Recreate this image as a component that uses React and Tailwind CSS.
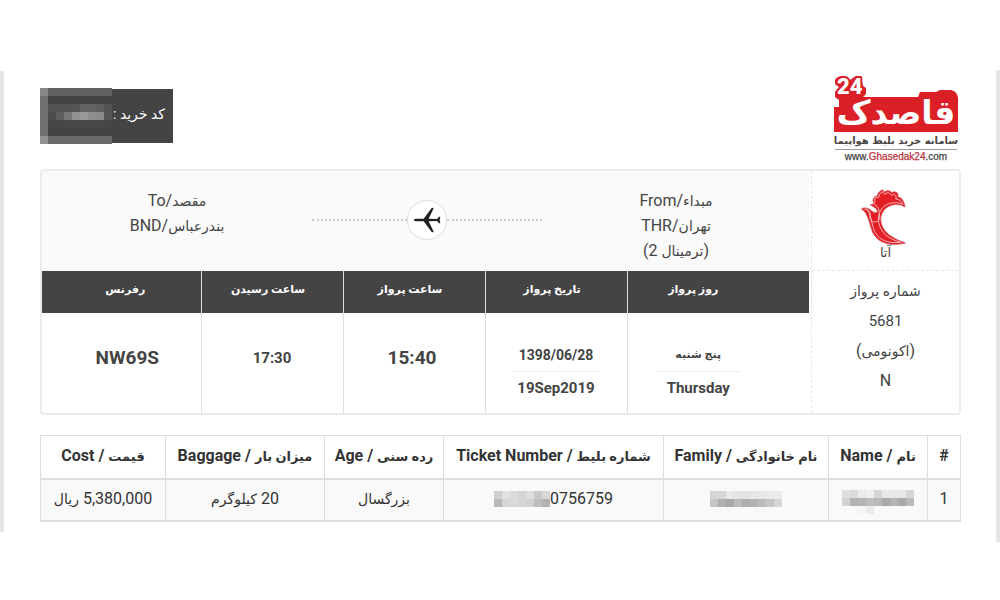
import React from 'react';

const CODE_MOSAIC = [
  ['#868686', '#606060', '#606060', '#606060', '#606060', '#606060', '#606060', '#606060', '#606060'],
  ['#707070', '#434343', '#434343', '#434343', '#434343', '#434343', '#434343', '#434343', '#434343'],
  ['#707070', '#525252', '#525252', '#525252', '#565656', '#626262', '#626262', '#5e5e5e', '#525252'],
  ['#707070', '#4d4d4d', '#5e5e5e', '#777777', '#929292', '#999999', '#8e8e8e', '#8c8c8c', '#555555'],
  ['#707070', '#454545', '#454545', '#484848', '#484848', '#484848', '#484848', '#484848', '#464646'],
  ['#707070', '#434343', '#434343', '#434343', '#434343', '#434343', '#434343', '#434343', '#434343'],
  ['#919191', '#6a6a6a', '#6a6a6a', '#6a6a6a', '#6a6a6a', '#6a6a6a', '#6a6a6a', '#6a6a6a', '#6a6a6a'],
];

const TICKET_MOSAIC = [
  ['#cfcfcf', '#e0e0e0', '#dbdbdb', '#d5d5d5', '#dedede', '#c9c9c9', '#d8d8d8'],
  ['#b8b8b8', '#d6d6d6', '#dadada', '#d5d5d5', '#d2d2d2', '#bebebe', '#b2b2b2'],
];

const FAMILY_MOSAIC = [
  ['#d6d6d6', '#d6d6d6', '#e8e8e8', '#e4e4e4', '#e4e4e4', '#e6e6e6', '#e8e8e8', '#ebebeb', '#ebebeb'],
  ['#c5c5c5', '#b0b0b0', '#a8a8a8', '#bbbbbb', '#aeaeae', '#b2b2b2', '#bbbbbb', '#c5c5c5', '#d6d6d6'],
];

const NAME_MOSAIC = [
  ['#dedede', '#dadada', '#eaeaea', '#f0f0f0', '#d6d6d6', '#e8e8e8', '#e6e6e6', '#e8e8e8', '#d6d6d6'],
  ['#d2d2d2', '#b2b2b2', '#b6b6b6', '#bebebe', '#b8b8b8', '#a9a9a9', '#b4b4b4', '#aaaaaa', '#bbbbbb'],
  ['none', 'none', '#f5f5f5', '#ebebeb', 'none', 'none', 'none', 'none', 'none'],
];

function Mosaic({ rows, className }) {
  const cols = rows[0].length;
  return (
    <svg
      width={cols * 8}
      height={rows.length * 8}
      shapeRendering="crispEdges"
      aria-hidden="true"
      className={className}
    >
      {rows.map((row, y) =>
        row.map((fill, x) => (
          <rect key={`${x}-${y}`} x={x * 8} y={y * 8} width="8" height="8" fill={fill} />
        ))
      )}
    </svg>
  );
}

function BrandLogo() {
  return (
    <svg width="128" height="90" viewBox="0 0 128 90" role="img" aria-label="Ghasedak24">
      <path
        fill="#da1f26"
        d="M2 33H7V26L3 23V18L7 13L3 10V6Q5 2 11 2Q16 2 18 6L24 2H29L31 12L34 14V20L31 23H86L88 18H104L108 16H119Q125 17 126 24V58H2Z"
      />
      <text x="5" y="20" fontSize="22" fontWeight="900" fontFamily="Roboto, sans-serif" fill="#ffffff" stroke="#da1f26" strokeWidth="4" strokeLinejoin="round" paintOrder="stroke">
        24
      </text>
      <text x="64" y="50" direction="rtl" textAnchor="middle" fontSize="33" fontWeight="700" fontFamily="DejaVu Sans, sans-serif" fill="#ffffff">
        قاصدک
      </text>
      <text x="64" y="70" direction="rtl" textAnchor="middle" fontSize="10" fontWeight="700" fontFamily="DejaVu Sans, sans-serif" fill="#4a4646">
        سامانه خرید بلیط هواپیما
      </text>
      <rect x="3" y="75" width="122" height="1" fill="#9a9a9a" />
      <text x="64" y="86" direction="ltr" textAnchor="middle" fontSize="10" fontFamily="Liberation Sans, sans-serif" fill="#444444" stroke="#444444" strokeWidth="0.25">
        www.<tspan fill="#b8323a" stroke="#b8323a">Ghasedak24</tspan>.com
      </text>
    </svg>
  );
}

function AirlineLogo() {
  return (
    <svg width="47" height="57" viewBox="0 0 141 171" fill="none" aria-hidden="true">
      <path
        fill="#e31e25"
        stroke="#d9555b"
        strokeWidth="2.5"
        strokeLinejoin="round"
        d="M4 63C12 57 26 60 34 68C41 74 48 76 52 72C53 60 41 58 31 50C38 50 43 46 39 38C38 30 45 24 52 24C53 13 61 9 67 5L73 12C82 5 91 8 95 14C107 7 118 16 113 27C125 26 133 42 135 57C118 46 93 47 76 62C61 77 58 98 69 119C82 143 108 154 136 165C98 175 57 168 40 137C29 116 26 73 4 63Z"
      />
      <path
        stroke="#ffffff"
        strokeWidth="2"
        strokeLinejoin="round"
        d="M13 64C23 63 31 70 31 80C27 96 38 105 49 101C61 98 61 85 57 77M57 73C58 57 48 53 40 47C48 43 43 34 45 30C50 26 56 31 57 26C57 17 63 15 67 11L74 19C83 11 89 15 94 22C105 15 111 24 107 33C117 33 124 39 128 49C111 41 88 42 71 56C53 74 51 99 62 121C75 146 96 155 122 163C88 167 59 158 46 134C34 112 34 75 19 63"
      />
    </svg>
  );
}

function Plane() {
  return (
    <svg width="28" height="26" viewBox="0 0 84 78" fill="#222222" aria-hidden="true">
      <path d="M2 39Q3 35 12 35H32L56 3Q59 1 62 4L47 35L72 36L78 29H82L80 39L82 49H78L72 42L47 43L62 74Q59 77 56 75L32 43H12Q3 43 2 39Z" />
    </svg>
  );
}

function Fa({ children }) {
  return <span className="text-[14px] leading-none">{children}</span>;
}

function FaBold({ children }) {
  return <span className="text-[13px] leading-none">{children}</span>;
}

const flightHead = 'border-l border-[#dddddd] pr-2 pb-1 font-bold';

function FlightTable() {
  return (
    <table dir="rtl" className="w-full flex-1 table-fixed border-collapse text-center">
      <colgroup>
        <col className="w-[182px]" />
        <col className="w-[142px]" />
        <col className="w-[142px]" />
        <col className="w-[142px]" />
        <col className="w-[159px]" />
      </colgroup>
      <thead>
        <tr className="h-[42px] bg-[#444444] text-[11px] text-white">
          <th className="border-l border-[#dddddd] pr-[50px] pb-1 font-bold">روز پرواز</th>
          <th className={flightHead}>تاریخ پرواز</th>
          <th className={flightHead}>ساعت پرواز</th>
          <th className={flightHead}>ساعت رسیدن</th>
          <th className="pb-1 pl-2 font-bold">رفرنس</th>
        </tr>
      </thead>
      <tbody>
        <tr className="h-[100px] text-[15px] font-bold text-[#444444]">
          <td className="border-l border-[#dddddd] pr-[68px] pl-7">
            <div className="border-b border-[#eeeeee] pt-4 pb-1 text-[11px] leading-[24px]">پنج شنبه</div>
            <div className="pt-1 leading-[24px]">Thursday</div>
          </td>
          <td className="border-l border-[#dddddd] px-7">
            <div className="border-b border-[#eeeeee] pt-4 pb-1 text-[14px] leading-[24px]">1398/06/28</div>
            <div className="pt-1 leading-[24px]">19Sep2019</div>
          </td>
          <td className="border-l border-[#dddddd] pr-1 pb-2.5 text-[19px]">15:40</td>
          <td className="border-l border-[#dddddd] pb-2.5">17:30</td>
          <td className="pb-2.5 pl-3 text-[19px]">NW69S</td>
        </tr>
      </tbody>
    </table>
  );
}

const headClass = 'border border-b-2 border-[#dddddd] pb-0.5 font-bold whitespace-nowrap';
const cellClass = 'border border-b-2 border-[#dddddd] pb-0.5 whitespace-nowrap';

function PassengerTable() {
  return (
    <table dir="rtl" className="mt-5 w-full table-fixed border-collapse text-center text-[16px] text-[#333333]">
      <colgroup>
        <col className="w-[33px]" />
        <col className="w-[99px]" />
        <col className="w-[165px]" />
        <col className="w-[220px]" />
        <col className="w-[119px]" />
        <col className="w-[159px]" />
        <col className="w-[125px]" />
      </colgroup>
      <thead>
        <tr className="h-[43px]">
          <th className={headClass}>#</th>
          <th className={headClass}><FaBold>نام</FaBold> / Name</th>
          <th className={headClass}><FaBold>نام خانوادگی</FaBold> / Family</th>
          <th className={headClass}><FaBold>شماره بلیط</FaBold> / Ticket Number</th>
          <th className={headClass}><FaBold>رده سنی</FaBold> / Age</th>
          <th className={headClass}><FaBold>میزان بار</FaBold> / Baggage</th>
          <th className={headClass}><FaBold>قیمت</FaBold> / Cost</th>
        </tr>
      </thead>
      <tbody>
        <tr className="h-[42px] bg-[#f9f9f9]">
          <td className={cellClass}>1</td>
          <td className="border border-b-2 border-[#dddddd] pt-1"><Mosaic rows={NAME_MOSAIC} className="mx-auto" /></td>
          <td className={cellClass}><Mosaic rows={FAMILY_MOSAIC} className="mx-auto" /></td>
          <td className={cellClass}>
            <div dir="ltr" className="flex items-center justify-center">
              <Mosaic rows={TICKET_MOSAIC} />
              <span>0756759</span>
            </div>
          </td>
          <td className={cellClass}><Fa>بزرگسال</Fa></td>
          <td className={cellClass}>20 <Fa>کیلوگرم</Fa></td>
          <td className={cellClass}>5,380,000 <Fa>ریال</Fa></td>
        </tr>
      </tbody>
    </table>
  );
}

export default function App() {
  return (
    <div className="flex min-h-screen items-start bg-white pt-[70px] font-['Roboto','DejaVu_Sans',sans-serif] text-[#444444]">
      <div className="mt-px h-[461px] w-1 shrink-0 bg-[#e6e6e6]" />
      <main className="min-w-0 flex-1 pr-[35px] pl-9">
        <header className="flex items-start justify-between">
          <div dir="rtl" className="relative mt-[19px] flex h-[54px] w-[133px] items-center bg-[#444444] pr-2 text-[14px] text-white">
            <span className="pb-1">کد خرید :</span>
            <Mosaic rows={CODE_MOSAIC} className="absolute -top-px left-0" />
          </div>
          <div className="mt-1 mr-px h-[95px]">
            <BrandLogo />
          </div>
        </header>

        <section className="flex rounded border-2 border-[#ececec]">
          <div className="mr-[2px] flex min-w-0 flex-1 flex-col">
            <div dir="rtl" className="flex h-[100px] justify-between bg-[#fafafa] pt-[17px] pr-[53px] pl-[55px] text-center text-[16px] leading-[25px]">
              <div className="w-40">
                <p><Fa>مبداء</Fa>/From</p>
                <p><Fa>تهران</Fa>/THR</p>
                <p>(<Fa>ترمینال</Fa> 2)</p>
              </div>
              <div className="flex h-16 w-[230px] items-center justify-center">
                <span className="h-0 flex-1 border-t-2 border-dotted border-[#cccccc]" />
                <span className="flex size-10 items-center justify-center rounded-full border border-[#dddddd] bg-white">
                  <Plane />
                </span>
                <span className="h-0 flex-1 border-t-2 border-dotted border-[#cccccc]" />
              </div>
              <div className="w-40">
                <p><Fa>مقصد</Fa>/To</p>
                <p><Fa>بندرعباس</Fa>/BND</p>
              </div>
            </div>
            <FlightTable />
          </div>
          <aside dir="rtl" className="w-[148px] shrink-0 border-l border-dashed border-[#e6e6e6] text-center">
            <div className="flex h-[100px] flex-col items-center border-b border-dashed border-[#e6e6e6] pt-[17px]">
              <div className="pr-1"><AirlineLogo /></div>
              <p className="text-[13px] leading-4">آتا</p>
            </div>
            <div className="pt-[5px] text-[16px] leading-[30px]">
              <p><Fa>شماره پرواز</Fa></p>
              <p className="text-[15px]">5681</p>
              <p>(<Fa>اکونومی</Fa>)</p>
              <p>N</p>
            </div>
          </aside>
        </section>

        <PassengerTable />
      </main>
      <div className="h-[472px] w-1 shrink-0 bg-[#e6e6e6]" />
    </div>
  );
}
